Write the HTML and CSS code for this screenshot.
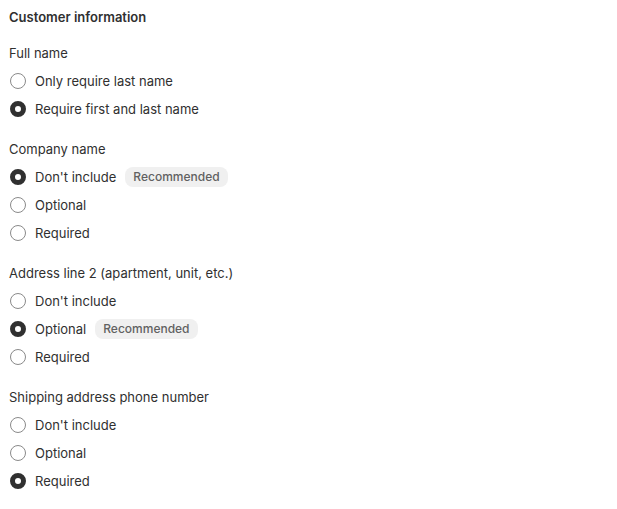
FILE: index.html
```html
<!DOCTYPE html>
<html lang="en">
<head>
    <meta charset="UTF-8">
    <meta name="viewport" content="width=device-width, initial-scale=1.0">
    <title>Customer information</title>
    <link rel="stylesheet" href="styles.css">
</head>
<body>
    <div class="card">
        <h2 class="title">Customer information</h2>

        <fieldset class="choice-list">
            <legend>Full name</legend>
            <label class="choice"><input type="radio" name="fullname"><span>Only require last name</span></label>
            <label class="choice"><input type="radio" name="fullname" checked><span>Require first and last name</span></label>
        </fieldset>

        <fieldset class="choice-list">
            <legend>Company name</legend>
            <label class="choice"><input type="radio" name="company" checked><span>Don't include</span><span class="badge">Recommended</span></label>
            <label class="choice"><input type="radio" name="company"><span>Optional</span></label>
            <label class="choice"><input type="radio" name="company"><span>Required</span></label>
        </fieldset>

        <fieldset class="choice-list">
            <legend>Address line 2 (apartment, unit, etc.)</legend>
            <label class="choice"><input type="radio" name="address2"><span>Don't include</span></label>
            <label class="choice"><input type="radio" name="address2" checked><span>Optional</span><span class="badge">Recommended</span></label>
            <label class="choice"><input type="radio" name="address2"><span>Required</span></label>
        </fieldset>

        <fieldset class="choice-list">
            <legend>Shipping address phone number</legend>
            <label class="choice"><input type="radio" name="phone"><span>Don't include</span></label>
            <label class="choice"><input type="radio" name="phone"><span>Optional</span></label>
            <label class="choice"><input type="radio" name="phone" checked><span>Required</span></label>
        </fieldset>
    </div>
</body>
</html>
```

FILE: styles.css
```css
body {
    margin: 0;
    padding: 0;
    background-color: #ffffff;
    font-family: Inter, "Noto Sans", sans-serif;
    font-size: 13px;
    line-height: 20px;
    color: #303030;
}
.card {
    padding: 7px 9px;
    display: flex;
    flex-direction: column;
    gap: 20px;
}
.title {
    margin: 0 0 -4px 0;
    font-size: 13px;
    font-weight: 600;
    line-height: 20px;
}
.choice-list {
    margin: 0;
    padding: 0;
    border: none;
    display: flex;
    flex-direction: column;
    gap: 8px;
}
.choice-list legend {
    padding: 0;
    margin-bottom: 8px;
    font-weight: 400;
}
.choice {
    display: flex;
    align-items: center;
    gap: 9px;
    height: 20px;
    cursor: pointer;
}
.choice input {
    appearance: none;
    -webkit-appearance: none;
    margin: 0 0 0 1px;
    width: 16px;
    height: 16px;
    border-radius: 50%;
    border: 1px solid #8a8a8a;
    background-color: #ffffff;
    box-sizing: border-box;
    flex-shrink: 0;
}
.choice input:checked {
    border: 5px solid #303030;
}
.badge {
    background-color: #f0f0f0;
    color: #616161;
    font-size: 12px;
    font-weight: 500;
    line-height: 20px;
    padding: 0 8px;
    border-radius: 8px;
}
```
